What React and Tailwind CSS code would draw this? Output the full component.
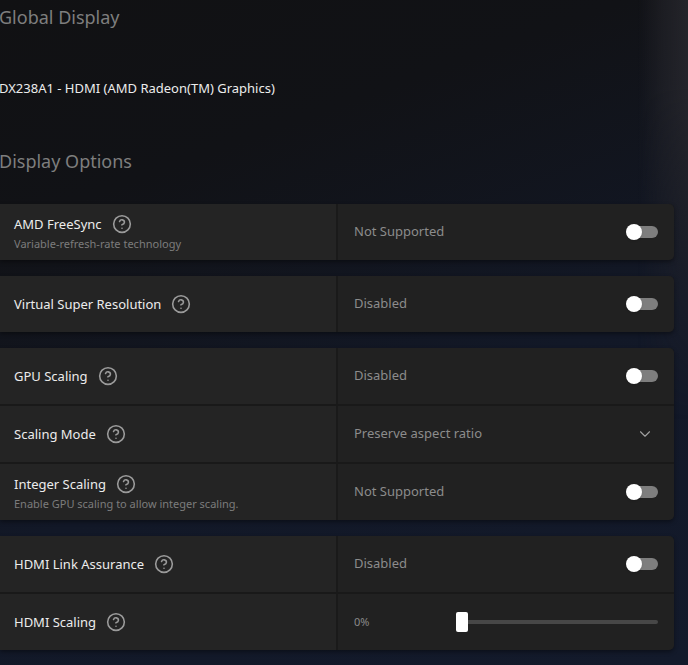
import { CircleHelp, ChevronDown } from "lucide-react";

const font = { fontFamily: '"Noto Sans", "Open Sans", sans-serif' };

function Help() {
  return <CircleHelp className="h-[20px] w-[20px] shrink-0 text-[#9a9a9a]" strokeWidth={1.9} />;
}

function Toggle() {
  return (
    <div className="relative mr-[16px] h-[16px] w-[32px]">
      <div className="absolute left-[6px] right-0 top-[2px] h-[12px] rounded-full bg-[#7e7e7e]" />
      <div className="absolute left-0 top-0 h-[16px] w-[16px] rounded-full bg-white shadow" />
    </div>
  );
}

function Slider() {
  return (
    <div className="relative mr-[16px] flex h-[20px] w-[202px] items-center">
      <div className="h-[4px] w-full rounded-sm bg-[#474747]" />
      <div className="absolute left-0 top-0 h-[20px] w-[12px] rounded-[2px] bg-white" />
    </div>
  );
}

function Row({ label, sub, value, control, small }) {
  return (
    <div className="flex h-[56px]">
      <div className="flex w-[336px] flex-col justify-center bg-[#242424] pl-[14px]">
        <div className="flex items-center gap-[10px]">
          <span className="text-[13px] leading-[18px] text-[#ececec]">{label}</span>
          <Help />
        </div>
        {sub && <div className="mt-[3px] text-[11px] leading-[14px] text-[#7c7c7c]">{sub}</div>}
      </div>
      <div className="w-[2px] bg-[#1a1a1a]" />
      <div className="flex flex-1 items-center justify-between bg-[#212121] pl-[16px]">
        <span className={small ? "text-[11px] text-[#8a8a8a]" : "text-[13px] text-[#8c8c8c]"}>{value}</span>
        {control}
      </div>
    </div>
  );
}

function Group({ children }) {
  return (
    <div className="flex w-[674px] flex-col gap-[2px] overflow-hidden rounded-r-[5px] bg-[#191919] shadow-[0_2px_4px_rgba(0,0,0,0.4)]">
      {children}
    </div>
  );
}

export default function App() {
  return (
    <div
      style={font}
      className="relative h-[665px] w-[688px] overflow-hidden bg-[linear-gradient(160deg,#111113_0%,#111216_25%,#121827_60%,#131a2b_100%)]"
    >
      <div className="pointer-events-none absolute right-0 top-0 h-[420px] w-[50px] bg-[linear-gradient(90deg,rgba(40,40,46,0)_0%,rgba(40,40,46,0.5)_50%,rgba(40,40,46,0.85)_100%)] [mask-image:linear-gradient(to_bottom,black_0%,black_20%,transparent_100%)]" />
      <div className="relative flex flex-col">
        <h1 className="-ml-[1px] mt-[5px] text-[18px] leading-[24px] text-[#7e7e7e]">Global Display</h1>
        <div className="-ml-[1px] mt-[50px] text-[13px] leading-[18px] text-[#ececec]">
          DX238A1 - HDMI (AMD Radeon(TM) Graphics)
        </div>
        <h2 className="-ml-[1px] mt-[52px] text-[18px] leading-[24px] text-[#7e7e7e]">Display Options</h2>
        <div className="mt-[31px] flex flex-col gap-[16px]">
          <Group>
            <Row label="AMD FreeSync" sub="Variable-refresh-rate technology" value="Not Supported" control={<Toggle />} />
          </Group>
          <Group>
            <Row label="Virtual Super Resolution" value="Disabled" control={<Toggle />} />
          </Group>
          <Group>
            <Row label="GPU Scaling" value="Disabled" control={<Toggle />} />
            <Row
              label="Scaling Mode"
              value="Preserve aspect ratio"
              control={<ChevronDown className="mr-[20px] h-[18px] w-[18px] text-[#a0a0a0]" strokeWidth={1.5} />}
            />
            <Row
              label="Integer Scaling"
              sub="Enable GPU scaling to allow integer scaling."
              value="Not Supported"
              control={<Toggle />}
            />
          </Group>
          <Group>
            <Row label="HDMI Link Assurance" value="Disabled" control={<Toggle />} />
            <Row label="HDMI Scaling" value="0%" small control={<Slider />} />
          </Group>
        </div>
      </div>
    </div>
  );
}
